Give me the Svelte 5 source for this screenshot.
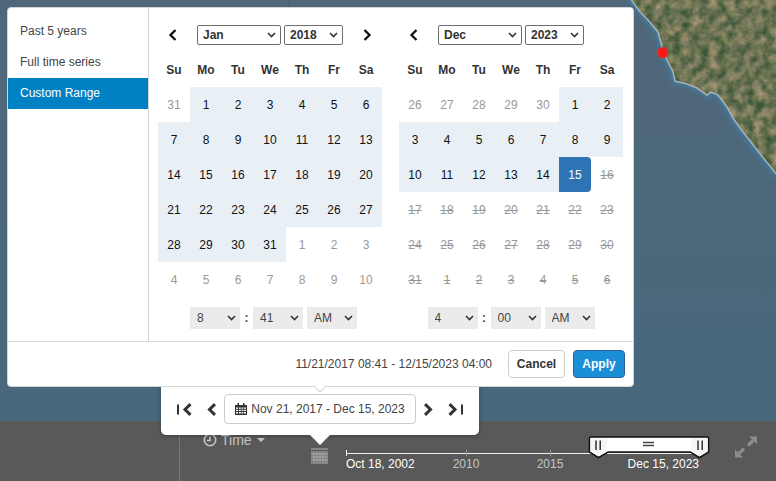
<script>
  const months = ['Jan','Feb','Mar','Apr','May','Jun','Jul','Aug','Sep','Oct','Nov','Dec'];
  const years = [2018,2019,2020,2021,2022,2023];
  const weekdays = ['Su','Mo','Tu','We','Th','Fr','Sa'];
  const hours = [1,2,3,4,5,6,7,8,9,10,11,12];
  const ranges = ['Past 5 years','Full time series','Custom Range'];
  const maxDate = new Date(2023, 11, 15);

  function buildDays(year, month) {
    const first = new Date(year, month, 1);
    const out = [];
    for (let i = 0; i < 42; i++) {
      const d = new Date(year, month, 1 - first.getDay() + i);
      const inMonth = d.getMonth() === month;
      const over = d > maxDate;
      out.push({
        n: d.getDate(),
        cls: over ? 'off struck' : !inMonth ? 'off' : +d === +maxDate ? 'end' : 'range'
      });
    }
    return out;
  }

  const calendars = [
    { month: 'Jan', year: 2018, days: buildDays(2018, 0), hour: 8, minute: '41', next: true },
    { month: 'Dec', year: 2023, days: buildDays(2023, 11), hour: 4, minute: '00', next: false }
  ];

  const ticks = [
    { left: 120, label: '2010' },
    { left: 204, label: '2015' }
  ];

  const coast = 'M630 -2L640 12L648 20L658 32L662 47L667 60L673 72L675 81L687 84L697 88L707 95L711 92L718 95L727 107L733 118L740 128L757 150L778 176';
</script>

<div class="page">
  <svg class="map" width="776" height="481" viewBox="0 0 776 481">
    <defs>
      <linearGradient id="water" x1="0" y1="0" x2="0" y2="1">
        <stop offset="0" stop-color="#50677a" />
        <stop offset="1" stop-color="#47687c" />
      </linearGradient>
      <filter id="terrain" x="0" y="0" width="100%" height="100%" color-interpolation-filters="sRGB">
        <feTurbulence type="fractalNoise" baseFrequency="0.11" numOctaves="4" seed="8" />
        <feColorMatrix values="0.6 0.2 0 0 0.02  0.36 0.1 0 0 0.22  0.32 0.15 0 0 0.09  0 0 0 0 1" />
        <feComposite in2="SourceGraphic" operator="in" />
      </filter>
      <filter id="soft"><feGaussianBlur stdDeviation="2" /></filter>
    </defs>
    <rect width="776" height="481" fill="url(#water)" />
    <rect x="289" y="0" width="1" height="8" fill="#43586a" />
    <path d={coast} fill="none" stroke="#43789a" stroke-width="7" filter="url(#soft)" />
    <path d="{coast}L778 -2Z" fill="#6c7550" filter="url(#terrain)" />
    <path d={coast} fill="none" stroke="#a3afb4" stroke-width="1.600" />
    <circle cx="662.7" cy="52.7" r="5.6" fill="#f41a1a" stroke="#8a6a62" stroke-width="0.8" />
  </svg>

  <div class="bar">
    <div class="bar-side"></div>
    <div class="time-label">
      <svg width="14" height="14" viewBox="0 0 14 14" fill="none" stroke="currentColor" stroke-width="1.600">
        <circle cx="7" cy="7" r="5.7" /><path d="M7 3.500V7.500H3.800" />
      </svg>
      <span>Time</span>
      <i class="caret"></i>
    </div>
    <svg class="bar-cal" width="17" height="19" viewBox="0 0 17 19" fill="#868686">
      <path d="M0 3h17v16H0z" />
      <path fill="#5a5a5a" d="M0 5h17v1.200H0z" />
      <path fill="#a2a2a2" d="M2 8h2v2H2zM5 8h2v2H5zM8 8h2v2H8zM11 8h2v2h-2zM14 8h1.500v2H14zM2 11h2v2H2zM5 11h2v2H5zM8 11h2v2H8zM11 11h2v2h-2zM14 11h1.500v2H14zM2 14h2v2H2zM5 14h2v2H5zM8 14h2v2H8zM11 14h2v2h-2zM14 14h1.500v2H14z" />
    </svg>
    <div class="timeline">
      <div class="axis"></div>
      <span class="start-tick"></span>
      <span class="label strong start">Oct 18, 2002</span>
      {#each ticks as t}
        <span class="tick" style="left: {t.left}px"></span>
        <span class="label center" style="left: {t.left}px">{t.label}</span>
      {/each}
      <span class="label strong finish">Dec 15, 2023</span>
      <svg class="slider" width="122" height="24" viewBox="0 0 122 24">
        <path d="M1.500 2.500a1.500 1.500 0 0 1 1.500-1.500h116a1.500 1.500 0 0 1 1.500 1.500V16l-9 5.500-9-5.500H20l-9.500 5.500-9-5.500z" fill="#fff" stroke="#111" stroke-width="1.600" />
        <path d="M2.400 2h16.600v13.500L10.500 20.500 2.400 15.600zM103 2h16.800v13.600l-8.300 5-8.500-5z" fill="#f6f6f6" />
        <path d="M8 4.500v9.500M12.200 4.500v9.500M110 4.500v9.500M114.200 4.500v9.500" stroke="#222" stroke-width="1.400" fill="none" />
        <path d="M55 6.500h11M55 9.500h11" stroke="#444" stroke-width="1.500" fill="none" />
      </svg>
    </div>
    <svg class="expand" width="22" height="22" viewBox="0 0 22 22" fill="#8d8d8d" stroke="#8d8d8d">
      <path d="M22 0.500V8L14 0.500Z" stroke="none" />
      <path d="M18 4.500 13 9.500" stroke-width="3.200" />
      <path d="M0 21.500V13.500L8 21.500Z" stroke="none" />
      <path d="M4 17.500 9 12.500" stroke-width="3.200" />
    </svg>
  </div>

  <div class="range-pop">
    <button class="nav" aria-label="First">
      <svg width="15" height="13" viewBox="0 0 15 13" fill="none" stroke="#333"><path d="M1 1.500v10" stroke-width="2" /><path d="M13.500 1.200 8 6.500l5.500 5.300" stroke-width="3" /></svg>
    </button>
    <button class="nav gap-wide" aria-label="Previous">
      <svg width="9" height="13" viewBox="0 0 9 13" fill="none" stroke="#333" stroke-width="3"><path d="M8 1.200 2.500 6.500 8 11.800" /></svg>
    </button>
    <button class="range-input">
      <svg width="12" height="12" viewBox="0 0 12 12" fill="#333">
        <path d="M0 2h12v10H0z" /><path fill="#333" d="M2.500 0h1.500v2.500H2.500zM8 0h1.500v2.500H8z" />
        <path fill="#fff" d="M1 4.500h2v1.300H1zM4 4.500h1.800v1.300H4zM6.500 4.500h1.800v1.300H6.500zM9 4.500h2v1.300H9zM1 6.800h2v1.300H1zM4 6.800h1.800v1.300H4zM6.500 6.800h1.800v1.300H6.500zM9 6.800h2v1.300H9zM1 9.100h2v1.300H1zM4 9.100h1.800v1.300H4zM6.500 9.100h1.800v1.300H6.500zM9 9.100h2v1.300H9z" />
      </svg>
      <span>Nov 21, 2017 - Dec 15, 2023</span>
    </button>
    <button class="nav" aria-label="Next">
      <svg width="9" height="13" viewBox="0 0 9 13" fill="none" stroke="#333" stroke-width="3"><path d="M1 1.200 6.500 6.500 1 11.800" /></svg>
    </button>
    <button class="nav gap-wide" aria-label="Last">
      <svg width="15" height="13" viewBox="0 0 15 13" fill="none" stroke="#333"><path d="M14 1.500v10" stroke-width="2" /><path d="M1.500 1.200 7 6.500l-5.500 5.300" stroke-width="3" /></svg>
    </button>
  </div>

  <div class="dialog">
    <div class="body">
      <ul class="ranges">
        {#each ranges as r}
          <li class:active={r === 'Custom Range'}>{r}</li>
        {/each}
      </ul>
      <div class="calendars">
        {#each calendars as cal, c}
          <div class="cal" class:first={c === 0}>
            <div class="cal-head">
              <button class="arrow" aria-label="Previous month">
                <svg width="9" height="12" viewBox="0 0 9 12" fill="none" stroke="#111" stroke-width="2.300"><path d="M7.500 1 2.500 6l5 5" /></svg>
              </button>
              <select class="month" value={cal.month}>
                {#each months as m}<option>{m}</option>{/each}
              </select>
              <select class="year" value={cal.year}>
                {#each years as y}<option>{y}</option>{/each}
              </select>
              <button class="arrow" class:hidden={!cal.next} aria-label="Next month">
                <svg width="9" height="12" viewBox="0 0 9 12" fill="none" stroke="#111" stroke-width="2.300"><path d="M1.500 1 6.500 6l-5 5" /></svg>
              </button>
            </div>
            <div class="grid">
              {#each weekdays as w}<div class="wd">{w}</div>{/each}
              {#each cal.days as d}<div class="day {d.cls}">{d.n}</div>{/each}
            </div>
            <div class="clock">
              <select class="tsel" value={cal.hour}>
                {#each hours as h}<option>{h}</option>{/each}
              </select>
              <span class="colon">:</span>
              <select class="tsel" value={cal.minute}>
                <option>00</option><option>41</option>
              </select>
              <select class="tsel ampm">
                <option>AM</option><option>PM</option>
              </select>
            </div>
          </div>
        {/each}
      </div>
    </div>
    <div class="foot">
      <span class="summary">11/21/2017 08:41 - 12/15/2023 04:00</span>
      <button class="btn">Cancel</button>
      <button class="btn apply">Apply</button>
    </div>
  </div>
</div>

<style>
  :global(body) {
    margin: 0;
    background: #50677a;
  }

  .page {
    position: relative;
    width: 776px;
    height: 481px;
    overflow: hidden;
    display: flex;
    flex-direction: column;
    justify-content: flex-end;
    font-family: "Liberation Sans", Arial, sans-serif;
    font-size: 12px;
    color: #444;
  }

  .map {
    position: absolute;
    left: 0;
    top: 0;
  }

  button {
    font: inherit;
    padding: 0;
    margin: 0;
    background: none;
    border: none;
  }

  /* bottom time bar */
  .bar {
    position: relative;
    height: 60px;
    background: #595959;
    display: flex;
    flex-shrink: 0;
  }

  .bar-side {
    width: 179px;
    border-right: 1px solid #797979;
  }

  .time-label {
    display: flex;
    align-items: center;
    gap: 4px;
    height: 14px;
    margin: 12px 0 0 23px;
    width: 63px;
    color: #c6c6c6;
    font-size: 14px;
  }

  .caret {
    width: 0;
    height: 0;
    margin-left: 1px;
    border-left: 4px solid transparent;
    border-right: 4px solid transparent;
    border-top: 4px solid #c6c6c6;
  }

  .bar-cal {
    margin: 24px 0 0 45px;
  }

  .timeline {
    position: relative;
    width: 353px;
    margin-left: 18px;
  }

  .axis {
    position: absolute;
    left: 0;
    right: 0;
    top: 32px;
    height: 1px;
    background: #eee;
  }

  .start-tick, .tick {
    position: absolute;
    top: 29px;
    width: 1px;
    height: 6px;
    background: #eee;
  }

  .start-tick {
    left: 0;
  }

  .tick {
    background: #999;
  }

  .label {
    position: absolute;
    top: 36px;
    line-height: 14px;
    white-space: nowrap;
    color: #c4c4c4;
  }

  .label.center {
    transform: translateX(-50%);
  }

  .label.strong {
    color: #fff;
  }

  .label.start {
    left: 0;
  }

  .label.finish {
    right: 0;
  }

  .slider {
    position: absolute;
    left: 242px;
    top: 15px;
  }

  .expand {
    margin: 15px 0 0 36px;
  }

  /* date range popup */
  .range-pop {
    position: absolute;
    left: 161px;
    top: 380px;
    width: 318px;
    height: 55px;
    box-sizing: border-box;
    padding: 14px 16px 11px;
    background: #fff;
    border-radius: 0 0 5px 5px;
    box-shadow: 0 1px 4px rgba(0, 0, 0, 0.3);
    display: flex;
    align-items: center;
    gap: 8px;
  }

  .range-pop::after {
    content: "";
    position: absolute;
    left: 149px;
    top: 55px;
    border-left: 10px solid transparent;
    border-right: 10px solid transparent;
    border-top: 10px solid #fff;
  }

  .nav {
    display: flex;
    align-items: center;
  }

  .gap-wide {
    margin-left: 7px;
  }

  .range-input {
    width: 192px;
    height: 30px;
    box-sizing: border-box;
    border: 1px solid #ccc;
    border-radius: 4px;
    display: flex;
    align-items: center;
    justify-content: center;
    gap: 4px;
    color: #444;
    white-space: nowrap;
  }

  /* main dialog */
  .dialog {
    position: absolute;
    left: 7px;
    top: 7px;
    width: 627px;
    height: 380px;
    box-sizing: border-box;
    background: #fff;
    border: 1px solid #d4d4d4;
    border-radius: 4px;
    display: flex;
    flex-direction: column;
  }

  .dialog::after {
    content: "";
    position: absolute;
    left: 308px;
    bottom: -5px;
    width: 7px;
    height: 7px;
    background: #fff;
    border-right: 1px solid #d4d4d4;
    border-bottom: 1px solid #d4d4d4;
    transform: rotate(45deg);
  }

  .body {
    display: flex;
    height: 333px;
    border-bottom: 1px solid #d9d9d9;
    box-sizing: content-box;
  }

  .ranges {
    list-style: none;
    margin: 0;
    padding: 8px 0 0;
    width: 140px;
    border-right: 1px solid #d4d4d4;
    flex-shrink: 0;
  }

  .ranges li {
    height: 31px;
    line-height: 31px;
    padding-left: 12px;
  }

  .ranges li.active {
    background: #0081c4;
    color: #fff;
  }

  .calendars {
    display: flex;
    gap: 17px;
    padding: 17px 0 0 9px;
  }

  .cal {
    width: 224px;
  }

  .cal-head {
    display: flex;
    align-items: center;
    height: 20px;
    margin-bottom: 7px;
  }

  .arrow {
    width: 28px;
    height: 20px;
    display: flex;
    align-items: center;
    justify-content: center;
    flex-shrink: 0;
  }

  .arrow.hidden {
    visibility: hidden;
  }

  select {
    appearance: none;
    font-family: inherit;
    font-size: 12px;
    margin: 0;
    outline: none;
    background-color: #fff;
    background-image: url("data:image/svg+xml,%3Csvg xmlns='http://www.w3.org/2000/svg' width='9' height='6'%3E%3Cpath d='M1 1l3.500 3.500L8 1' fill='none' stroke='%23333' stroke-width='1.600'/%3E%3C/svg%3E");
    background-repeat: no-repeat;
    background-position: right 4px center;
  }

  .month, .year {
    height: 20px;
    box-sizing: border-box;
    border: 1px solid #6e6e6e;
    border-radius: 2px;
    padding: 0 0 0 5px;
    font-weight: 700;
    color: #333;
  }

  .month {
    width: 84px;
    margin-left: 11px;
    margin-right: 3px;
  }

  .year {
    width: 59px;
    margin-right: 10px;
  }

  .grid {
    display: grid;
    grid-template-columns: repeat(7, 32px);
    grid-auto-rows: 35px;
  }

  .wd, .day {
    display: flex;
    align-items: center;
    justify-content: center;
  }

  .wd {
    font-weight: 700;
    color: #333;
  }

  .day {
    color: #111;
  }

  .day.range {
    background: #e8f0f6;
  }

  .day.off {
    color: #999;
  }

  .day.struck {
    text-decoration: line-through;
  }

  .day.end {
    background: #2e74b5;
    color: #fff;
    border-radius: 0 4px 4px 0;
  }

  .clock {
    display: flex;
    align-items: center;
    justify-content: center;
    margin-top: 10px;
  }

  .cal.first .clock {
    padding-left: 7px;
  }

  .tsel {
    width: 50px;
    height: 22px;
    border: none;
    border-radius: 0;
    padding: 0 0 0 7px;
    background-color: #ebebeb;
    color: #444;
  }

  .ampm {
    margin-left: 4px;
  }

  .colon {
    width: 13px;
    text-align: center;
    font-weight: 700;
  }

  .foot {
    flex: 1;
    display: flex;
    align-items: center;
    justify-content: flex-end;
    padding-right: 8px;
  }

  .summary {
    margin-right: 16px;
  }

  .btn {
    height: 28px;
    width: 57px;
    box-sizing: border-box;
    border: 1px solid #ccc;
    border-radius: 4px;
    background: #fff;
    color: #333;
    font-weight: 700;
  }

  .btn.apply {
    width: 52px;
    margin-left: 8px;
    background: #1a8fd8;
    border-color: #2c5f9e;
    color: #fff;
  }
</style>
